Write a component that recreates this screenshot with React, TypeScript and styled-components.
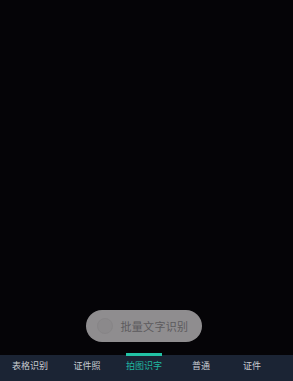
import React from "react";
import styled, { createGlobalStyle } from "styled-components";

const GlobalStyle = createGlobalStyle`
    html, body {
        margin: 0;
        padding: 0;
        background: #050407;
        font-family: "Noto Sans CJK SC", "Noto Sans", sans-serif;
    }
`;

const Screen = styled.div`
    display: flex;
    flex-direction: column;
    width: 293px;
    height: 381px;
    background: #050407;
    overflow: hidden;
`;

const Viewfinder = styled.div`
    flex: 1;
    display: flex;
    align-items: flex-end;
    justify-content: center;
    padding: 0 6px 13px 0;
`;

const BatchButton = styled.button`
    display: flex;
    align-items: center;
    gap: 8px;
    width: 116px;
    height: 32px;
    padding: 0 0 0 11px;
    border: none;
    border-radius: 16px;
    background: #8f8d8f;
    color: #5c5a5d;
    font-family: inherit;
    font-size: 11px;
    letter-spacing: 0.3px;
`;

const BatchIcon = styled.span`
    width: 14px;
    height: 14px;
    border-radius: 50%;
    border: 1px solid #878587;
    background: #8b898b;
`;

const TabBar = styled.nav`
    display: flex;
    height: 26px;
    background: #1b2434;
    padding: 0 4px;
`;

const Tab = styled.div<{ $active?: boolean; $width: number }>`
    position: relative;
    width: ${(p) => p.$width}px;
    display: flex;
    justify-content: center;
    padding-top: 4px;
    font-size: 9px;
    color: ${(p) => (p.$active ? "#1fb8a0" : "#c9ccd2")};

    &::before {
        content: "";
        display: ${(p) => (p.$active ? "block" : "none")};
        position: absolute;
        top: -2px;
        left: 50%;
        transform: translateX(-50%);
        width: 36px;
        height: 3px;
        background: #22c3a6;
    }
`;

const tabs = [
    { label: "表格识别", width: 52 },
    { label: "证件照", width: 62 },
    { label: "拍图识字", width: 52, active: true },
    { label: "普通", width: 62 },
    { label: "证件", width: 40 },
];

const App: React.FC = () => {
    return (
        <>
            <GlobalStyle />
            <Screen>
                <Viewfinder>
                    <BatchButton>
                        <BatchIcon />
                        批量文字识别
                    </BatchButton>
                </Viewfinder>
                <TabBar>
                    {tabs.map((t) => (
                        <Tab key={t.label} $active={t.active} $width={t.width}>
                            {t.label}
                        </Tab>
                    ))}
                </TabBar>
            </Screen>
        </>
    );
};

export default App;
